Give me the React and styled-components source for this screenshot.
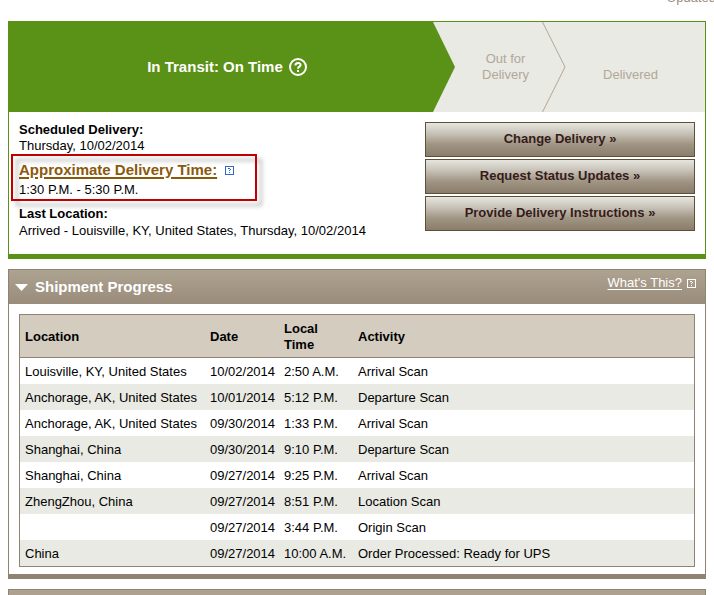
import React, { useState } from "react";
import styled, { createGlobalStyle } from "styled-components";

const GlobalStyle = createGlobalStyle`
    *, *::after{box-sizing: border-box;}

    body{
        margin: 0;
        background: #fff;
        color: #000;
        font-family: "Liberation Sans", Arial, sans-serif;
        font-size: 13px;
        line-height: 16px;
    }
`

const Page = styled.main`
    overflow: hidden;
    padding: 0 8px;
`

const Updated = styled.p`
    display: flex;
    justify-content: flex-end;
    margin: -10px -10px 15px 0;
    color: #9a8d80;
`

const Summary = styled.section`
    border: 1px solid #5a9117;
    border-bottom-width: 5px;
`

const Stages = styled.ol`
    display: flex;
    height: 90px;
    margin: 0;
    padding: 0;
    background: #e9eae3;
    color: #b3a79a;
    list-style: none;
    text-align: center;
`

const CurrentStage = styled.li`
    flex: 436 1 0;
    display: flex;
    align-items: center;
    justify-content: center;
    gap: 6px;
    padding-right: 10px;
    background: #5a9117;
    clip-path: polygon(0 0, calc(100% - 22px) 0, 100% 50%, calc(100% - 22px) 100%, 0 100%);
    color: #fff;
    font-size: 15px;
    font-weight: bold;
`

const NextStage = styled.li`
    flex: ${({ $grow }) => $grow} 1 0;
    display: flex;
    align-items: flex-end;
    justify-content: center;
    padding: ${({ $last }) => ($last ? "0 10px 29px 0" : "0 0 29px 14px")};
`

const StageDivider = styled.li`
    flex: none;

    svg{display: block;}
`

const HelpButton = styled.button`
    display: flex;
    padding: 0;
    border: 0;
    background: none;
    color: ${({ $color }) => $color || "inherit"};
    cursor: pointer;
`

const Details = styled.div`
    display: flex;
    align-items: flex-start;
    justify-content: space-between;
    padding: 10px 10px 15px;
`

const Facts = styled.dl`
    margin: 0;

    dt{font-weight: bold;}
    dd{margin: 0;}
`

const Fact = styled.div`
    dd{margin-top: ${({ $gap }) => $gap || "0"};}
`

const HighlightedFact = styled.div`
    position: relative;
    margin: 6px 0 8px;

    dt{
        display: flex;
        align-items: center;
        gap: 8px;
        margin-bottom: 2px;
        font-size: 15px;
        line-height: 20px;
    }

    &::after{
        content: "";
        position: absolute;
        top: -6px;
        left: -8px;
        width: 246px;
        height: 47px;
        border: 2px solid #c00000;
        filter: drop-shadow(5px 5px 2px rgba(0, 0, 0, 0.3));
        pointer-events: none;
    }
`

const TimeLink = styled.a`
    color: #8a5a0c;
    text-decoration-thickness: 2px;
    text-underline-offset: 2px;
`

const Actions = styled.div`
    display: flex;
    flex-direction: column;
    flex: 0 0 270px;
    gap: 2px;
`

const ActionButton = styled.button`
    height: 35px;
    padding: 0 0 2px;
    border: 1px solid #5d4f38;
    background: linear-gradient(#e6e6df 0%, #c9c4ba 30%, #a09483 65%, #8a7d6c 100%);
    color: #351c1a;
    font: bold 13px "Liberation Sans", Arial, sans-serif;
    cursor: pointer;
`

const Panel = styled.section`
    margin-top: 10px;
    border: 1px solid #8f8473;
    border-bottom-width: 5px;
`

const PanelHeader = styled.header`
    display: flex;
    justify-content: space-between;
    height: 34px;
    padding: 0 9px 0 6px;
    background: linear-gradient(#aea291, #998c7b);
    color: #fff;
`

const PanelTitle = styled.h2`
    display: flex;
    margin: 0;
    font-size: 15px;
`

const PanelToggle = styled.button`
    display: flex;
    align-items: center;
    gap: 7px;
    padding: 0;
    border: 0;
    background: none;
    color: inherit;
    font: inherit;
    cursor: pointer;
`

const PanelHelp = styled.div`
    display: flex;
    align-items: center;
    align-self: flex-start;
    gap: 5px;
    padding-top: 5px;

    a{
        color: #fff;
        text-underline-offset: 2px;
    }
`

const PanelBody = styled.div`
    padding: 10px 10px 7px;
`

const ScanTable = styled.table`
    width: 100%;
    border: 1px solid #8f8473;
    border-spacing: 0;
    table-layout: fixed;
    text-align: left;

    th, td{padding: 2px 5px 0;}

    th{
        height: 43px;
        border-bottom: 1px solid #8f8473;
        background: #d4ccbf;
    }

    td{
        height: 26px;
        white-space: nowrap;
    }

    tbody tr:nth-child(even){background: #e9eae3;}

    .location{width: 185px;}
    .date, .time{width: 74px;}
`

const scans = [
    ["Louisville, KY, United States", "10/02/2014", "2:50 A.M.", "Arrival Scan"],
    ["Anchorage, AK, United States", "10/01/2014", "5:12 P.M.", "Departure Scan"],
    ["Anchorage, AK, United States", "09/30/2014", "1:33 P.M.", "Arrival Scan"],
    ["Shanghai, China", "09/30/2014", "9:10 P.M.", "Departure Scan"],
    ["Shanghai, China", "09/27/2014", "9:25 P.M.", "Arrival Scan"],
    ["ZhengZhou, China", "09/27/2014", "8:51 P.M.", "Location Scan"],
    ["", "09/27/2014", "3:44 P.M.", "Origin Scan"],
    ["China", "09/27/2014", "10:00 A.M.", "Order Processed: Ready for UPS"],
];

const SmallHelpIcon = () => (
    <svg width="9" height="9" viewBox="0 0 9 9" fill="none" stroke="currentColor" shapeRendering="crispEdges">
        <rect x="0.5" y="0.5" width="8" height="8" />
        <path d="M3 2.5H5M5 3.5H6M4 4.5H5M4 6.5H5" />
    </svg>
);

const RoundHelpIcon = () => (
    <svg width="18" height="18" viewBox="0 0 18 18" fill="none" stroke="currentColor" strokeWidth="2">
        <circle cx="9" cy="9" r="8" />
        <path d="M6.4 7.4C6.4 4.2 11.6 4.2 11.6 7.1C11.6 8.8 9 8.6 9 10.7" />
        <path d="M9 11.9V13.9" />
    </svg>
);

const StatusSummary = () => (
    <Summary>
        <Stages>
            <CurrentStage>
                In Transit: On Time
                <HelpButton aria-label="Help with this status"><RoundHelpIcon /></HelpButton>
            </CurrentStage>
            <NextStage $grow={73}>Out for<br />Delivery</NextStage>
            <StageDivider aria-hidden="true">
                <svg width="24" height="90" viewBox="0 0 24 90" fill="none" stroke="#b3a793">
                    <path d="M0.5 0L23 45L0.5 90" />
                </svg>
            </StageDivider>
            <NextStage $grow={129} $last>Delivered</NextStage>
        </Stages>
        <Details>
            <Facts>
                <Fact>
                    <dt>Scheduled Delivery:</dt>
                    <dd>Thursday, 10/02/2014</dd>
                </Fact>
                <HighlightedFact>
                    <dt>
                        <TimeLink href="#time">Approximate Delivery Time:</TimeLink>
                        <HelpButton $color="#3366cc" aria-label="Help with delivery time"><SmallHelpIcon /></HelpButton>
                    </dt>
                    <dd>1:30 P.M. - 5:30 P.M.</dd>
                </HighlightedFact>
                <Fact $gap="1px">
                    <dt>Last Location:</dt>
                    <dd>Arrived - Louisville, KY, United States, Thursday, 10/02/2014</dd>
                </Fact>
            </Facts>
            <Actions>
                <ActionButton>Change Delivery »</ActionButton>
                <ActionButton>Request Status Updates »</ActionButton>
                <ActionButton>Provide Delivery Instructions »</ActionButton>
            </Actions>
        </Details>
    </Summary>
);

const ShipmentProgress = () => {
    const [open, setOpen] = useState(true);

    return (
        <Panel>
            <PanelHeader>
                <PanelTitle>
                    <PanelToggle aria-expanded={open} onClick={() => setOpen(!open)}>
                        <svg width="13" height="7" viewBox="0 0 13 7" fill="currentColor">
                            <path d="M0 0H13L6.5 7Z" />
                        </svg>
                        Shipment Progress
                    </PanelToggle>
                </PanelTitle>
                <PanelHelp>
                    <a href="#whats-this">What's This?</a>
                    <HelpButton aria-label="Help with shipment progress"><SmallHelpIcon /></HelpButton>
                </PanelHelp>
            </PanelHeader>
            {open && (
                <PanelBody>
                    <ScanTable>
                        <thead>
                            <tr>
                                <th className="location">Location</th>
                                <th className="date">Date</th>
                                <th className="time">Local Time</th>
                                <th>Activity</th>
                            </tr>
                        </thead>
                        <tbody>
                            {scans.map(([location, date, time, activity]) => (
                                <tr key={date + time}>
                                    <td>{location}</td>
                                    <td>{date}</td>
                                    <td>{time}</td>
                                    <td>{activity}</td>
                                </tr>
                            ))}
                        </tbody>
                    </ScanTable>
                </PanelBody>
            )}
        </Panel>
    );
};

const App = () => (
    <>
        <GlobalStyle />
        <Page>
            <Updated>Updated</Updated>
            <StatusSummary />
            <ShipmentProgress />
            <Panel>
                <PanelHeader />
            </Panel>
        </Page>
    </>
);

export default App;
